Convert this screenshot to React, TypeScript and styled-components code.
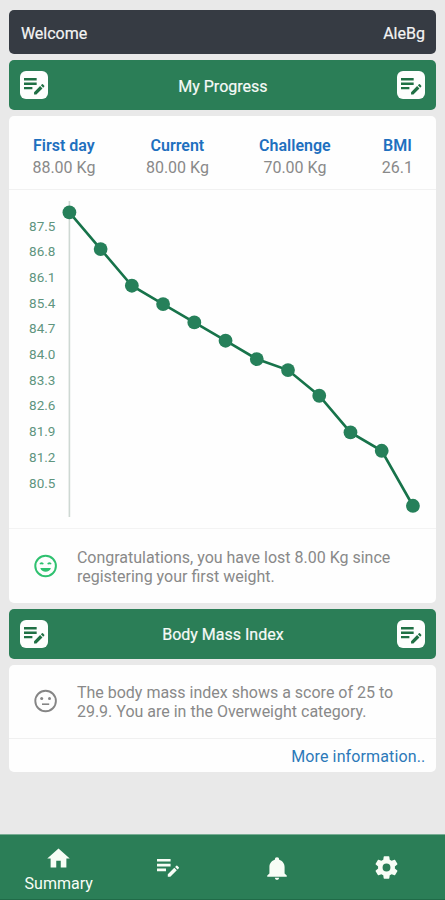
import React from "react";
import styled, { createGlobalStyle } from "styled-components";

const GREEN = "#2b7e57";

const GlobalStyle = createGlobalStyle`
  * { box-sizing: border-box; }
  body {
    margin: 0;
    background: #e9e9e9;
    font-family: Roboto, "Liberation Sans", sans-serif;
    font-size: 16px;
    color: #898989;
  }
`;

const Screen = styled.div`
  display: flex;
  flex-direction: column;
  width: 445px;
  height: 900px;
  overflow: hidden;
`;

const Content = styled.main`
  flex: 1;
  display: flex;
  flex-direction: column;
  gap: 6px;
  padding: 9.7px 8.6px 0 9.4px;
`;

const WelcomeBar = styled.header`
  display: flex;
  justify-content: space-between;
  align-items: center;
  height: 44.6px;
  padding: 2px 11.5px 0;
  border-radius: 5px;
  background: #363b43;
  color: #f4f4f4;
  flex: none;
`;

const SectionBar = styled.div`
  display: flex;
  justify-content: space-between;
  align-items: center;
  flex: none;
  height: 50px;
  padding: 0 11px;
  border-radius: 5px;
  background: ${GREEN};
  color: #f6faf7;
`;

const SectionTitle = styled.h2`
  margin: 2px 0 0;
  font-size: 16px;
  font-weight: 400;
  -webkit-text-stroke: 0.2px currentColor;
`;

const NoteButton = styled.button`
  display: grid;
  place-items: center;
  width: 28px;
  height: 28px;
  padding: 3px 0 0;
  border: 0;
  border-radius: 6px;
  background: #fdfefd;
  color: #1f7044;
`;

const Card = styled.section`
  flex: none;
  border-radius: 5px;
  background: #fefefe;
`;

const Stats = styled.div`
  display: grid;
  grid-template-columns: 109px 118px 117px 88px;
  height: 74px;
  padding-top: 19px;
  border-bottom: 1px solid #f1f1f1;
  text-align: center;
`;

const Stat = styled.div`
  line-height: 22px;
`;

const StatLabel = styled.div`
  color: #1e70bf;
  font-weight: 600;
`;

const StatValue = styled.div``;

const ChartArea = styled.div`
  display: flex;
  height: 339px;
  border-bottom: 1px solid #f3f3f3;
`;

const AxisLabels = styled.div`
  width: 46px;
  padding-top: 23.5px;
  text-align: right;
  font-size: 13.5px;
  line-height: 25.67px;
  color: #5f957e;
`;

const Plot = styled.svg`
  display: block;
  flex: 1;
  height: 338px;
`;

const Message = styled.div<{ $height: number; $top: number }>`
  display: flex;
  height: ${(p) => p.$height}px;
  padding: ${(p) => p.$top}px 0 0 23px;
  line-height: 19px;
`;

const FaceSlot = styled.div`
  width: 44.5px;
  padding-top: 5px;
`;

const MessageText = styled.p`
  margin: 0;
`;

const TextLine = styled.span`
  display: block;
`;

const MoreLink = styled.a`
  display: block;
  height: 34px;
  padding: 8.5px 11px 0 0;
  border-top: 1px solid #f0f0f0;
  text-align: right;
  line-height: 19px;
  letter-spacing: 0.13px;
  color: #2c79b9;
`;

const Nav = styled.nav`
  display: grid;
  grid-template-columns: repeat(4, 109.2px);
  justify-content: center;
  flex: none;
  height: 66px;
  border-top: 1px solid #78ad94;
  border-bottom: 1px solid #206b48;
  background: ${GREEN};
  color: #f8fdf6;
`;

const NavItem = styled.button`
  display: flex;
  flex-direction: column;
  align-items: center;
  justify-content: center;
  padding: 1px 0 0;
  border: 0;
  background: none;
  color: inherit;
  font: inherit;
`;

const NavLabel = styled.span`
  line-height: 18px;
  margin-top: 3px;
  margin-bottom: -2px;
`;

const paths = {
  home: "M10,20V14H14V20H19V12H22L12,3L2,12H5V20H10Z",
  bell: "M21,19V20H3V19L5,17V11C5,7.9 7.03,5.17 10,4.29C10,4.19 10,4.1 10,4A2,2 0 0,1 12,2A2,2 0 0,1 14,4C14,4.1 14,4.19 14,4.29C16.97,5.17 19,7.9 19,11V17L21,19M14,21A2,2 0 0,1 12,23A2,2 0 0,1 10,21",
  cog: "M12,15.5A3.5,3.5 0 0,1 8.5,12A3.5,3.5 0 0,1 12,8.5A3.5,3.5 0 0,1 15.5,12A3.5,3.5 0 0,1 12,15.5M19.43,12.97C19.47,12.65 19.5,12.33 19.5,12C19.5,11.67 19.47,11.34 19.43,11L21.54,9.37C21.73,9.22 21.78,8.95 21.66,8.73L19.66,5.27C19.54,5.05 19.27,4.96 19.05,5.05L16.56,6.05C16.04,5.66 15.5,5.32 14.87,5.07L14.5,2.42C14.46,2.18 14.25,2 14,2H10C9.75,2 9.54,2.18 9.5,2.42L9.13,5.07C8.5,5.32 7.96,5.66 7.44,6.05L4.95,5.05C4.73,4.96 4.46,5.05 4.34,5.27L2.34,8.73C2.21,8.95 2.27,9.22 2.46,9.37L4.57,11C4.53,11.34 4.5,11.67 4.5,12C4.5,12.33 4.53,12.65 4.57,12.97L2.46,14.63C2.27,14.78 2.21,15.05 2.34,15.27L4.34,18.73C4.46,18.95 4.73,19.03 4.95,18.95L7.44,17.94C7.96,18.34 8.5,18.68 9.13,18.93L9.5,21.58C9.54,21.82 9.75,22 10,22H14C14.25,22 14.46,21.82 14.5,21.58L14.87,18.93C15.5,18.67 16.04,18.34 16.56,17.94L19.05,18.95C19.27,19.03 19.54,18.95 19.66,18.73L21.66,15.27C21.78,15.05 21.73,14.78 21.54,14.63L19.43,12.97Z",
};

function Icon({ name, size }: { name: keyof typeof paths; size: number }) {
  return (
    <svg width={size} height={size} viewBox="0 0 24 24" fill="currentColor">
      <path d={paths[name]} />
    </svg>
  );
}

function NoteIcon({ width }: { width: number }) {
  return (
    <svg width={width} height={(width * 18) / 22} viewBox="0 0 22 18" fill="currentColor">
      <path d="M0 0H13.6V2.6H0ZM0 4.8H13.6V7.4H0ZM0 9.6H9V12.2H0Z" />
      <path d="M10.8 15.2L17.3 8.7L19.8 11.2L13.3 17.7H10.8ZM18.1 7.9L19.3 6.7Q19.8 6.2 20.3 6.7L21.8 8.2Q22.2 8.7 21.8 9.2L20.6 10.4Z" />
    </svg>
  );
}

function HappyFace() {
  return (
    <svg width="26" height="26" viewBox="0 0 26 26" fill="none" stroke="#2fc170" strokeWidth="2">
      <circle cx="13.6" cy="13" r="10.3" />
      <path d="M8.3 11.2C8.6 9.7 10.6 9.7 11 11.2M16 11.2C16.4 9.7 18.4 9.7 18.8 11.2" strokeWidth="1.8" />
      <path d="M8.3 15H18.9C17.6 20 9.6 20 8.3 15Z" fill="#2fc170" stroke="none" />
    </svg>
  );
}

function NeutralFace() {
  return (
    <svg width="26" height="26" viewBox="0 0 26 26" fill="none" stroke="#858585" strokeWidth="1.9">
      <circle cx="13.6" cy="13" r="10.3" />
      <circle cx="9.7" cy="10.4" r="1.5" fill="#858585" stroke="none" />
      <circle cx="17.5" cy="10.4" r="1.5" fill="#858585" stroke="none" />
      <path d="M10 16.2H17.2" strokeWidth="1.6" />
    </svg>
  );
}

function Section({ title }: { title: string }) {
  return (
    <SectionBar>
      <NoteButton aria-label="Edit">
        <NoteIcon width={20.5} />
      </NoteButton>
      <SectionTitle>{title}</SectionTitle>
      <NoteButton aria-label="Edit">
        <NoteIcon width={20.5} />
      </NoteButton>
    </SectionBar>
  );
}

const stats = [
  ["First day", "88.00 Kg"],
  ["Current", "80.00 Kg"],
  ["Challenge", "70.00 Kg"],
  ["BMI", "26.1"],
];

const ticks = ["87.5", "86.8", "86.1", "85.4", "84.7", "84.0", "83.3", "82.6", "81.9", "81.2", "80.5"];
const weights = [87.9, 86.9, 85.9, 85.4, 84.9, 84.4, 83.9, 83.6, 82.9, 81.9, 81.4, 79.9];
const points = weights.map((w, i) => [14.4 + i * 31.23, 22.4 + (87.9 - w) * 36.67]);

export default function App() {
  return (
    <Screen>
      <GlobalStyle />
      <Content>
        <WelcomeBar>
          <SectionTitle as="span">Welcome</SectionTitle>
          <SectionTitle as="span">AleBg</SectionTitle>
        </WelcomeBar>
        <Section title="My Progress" />
        <Card>
          <Stats>
            {stats.map(([label, value]) => (
              <Stat key={label}>
                <StatLabel>{label}</StatLabel>
                <StatValue>{value}</StatValue>
              </Stat>
            ))}
          </Stats>
          <ChartArea>
            <AxisLabels>
              {ticks.map((t) => (
                <div key={t}>{t}</div>
              ))}
            </AxisLabels>
            <Plot>
              <path d="M14.4 11V327" stroke="#ced8d3" strokeWidth="1.6" />
              <polyline points={points.map((p) => p.join(",")).join(" ")} fill="none" stroke="#17734a" strokeWidth="2.6" />
              {points.map(([x, y]) => (
                <circle key={x} cx={x} cy={y} r="6.9" fill="#26805a" />
              ))}
            </Plot>
          </ChartArea>
          <Message $height={73.5} $top={19}>
            <FaceSlot>
              <HappyFace />
            </FaceSlot>
            <MessageText>
              <TextLine>Congratulations, you have lost 8.00 Kg since</TextLine>
              <TextLine>registering your first weight.</TextLine>
            </MessageText>
          </Message>
        </Card>
        <Section title="Body Mass Index" />
        <Card>
          <Message $height={73} $top={18.5}>
            <FaceSlot>
              <NeutralFace />
            </FaceSlot>
            <MessageText>
              <TextLine>The body mass index shows a score of 25 to</TextLine>
              <TextLine>29.9. You are in the Overweight category.</TextLine>
            </MessageText>
          </Message>
          <MoreLink>More information..</MoreLink>
        </Card>
      </Content>
      <Nav>
        <NavItem>
          <Icon name="home" size={27} />
          <NavLabel>Summary</NavLabel>
        </NavItem>
        <NavItem aria-label="Records">
          <NoteIcon width={22} />
        </NavItem>
        <NavItem aria-label="Notifications">
          <Icon name="bell" size={26} />
        </NavItem>
        <NavItem aria-label="Settings">
          <Icon name="cog" size={27} />
        </NavItem>
      </Nav>
    </Screen>
  );
}
